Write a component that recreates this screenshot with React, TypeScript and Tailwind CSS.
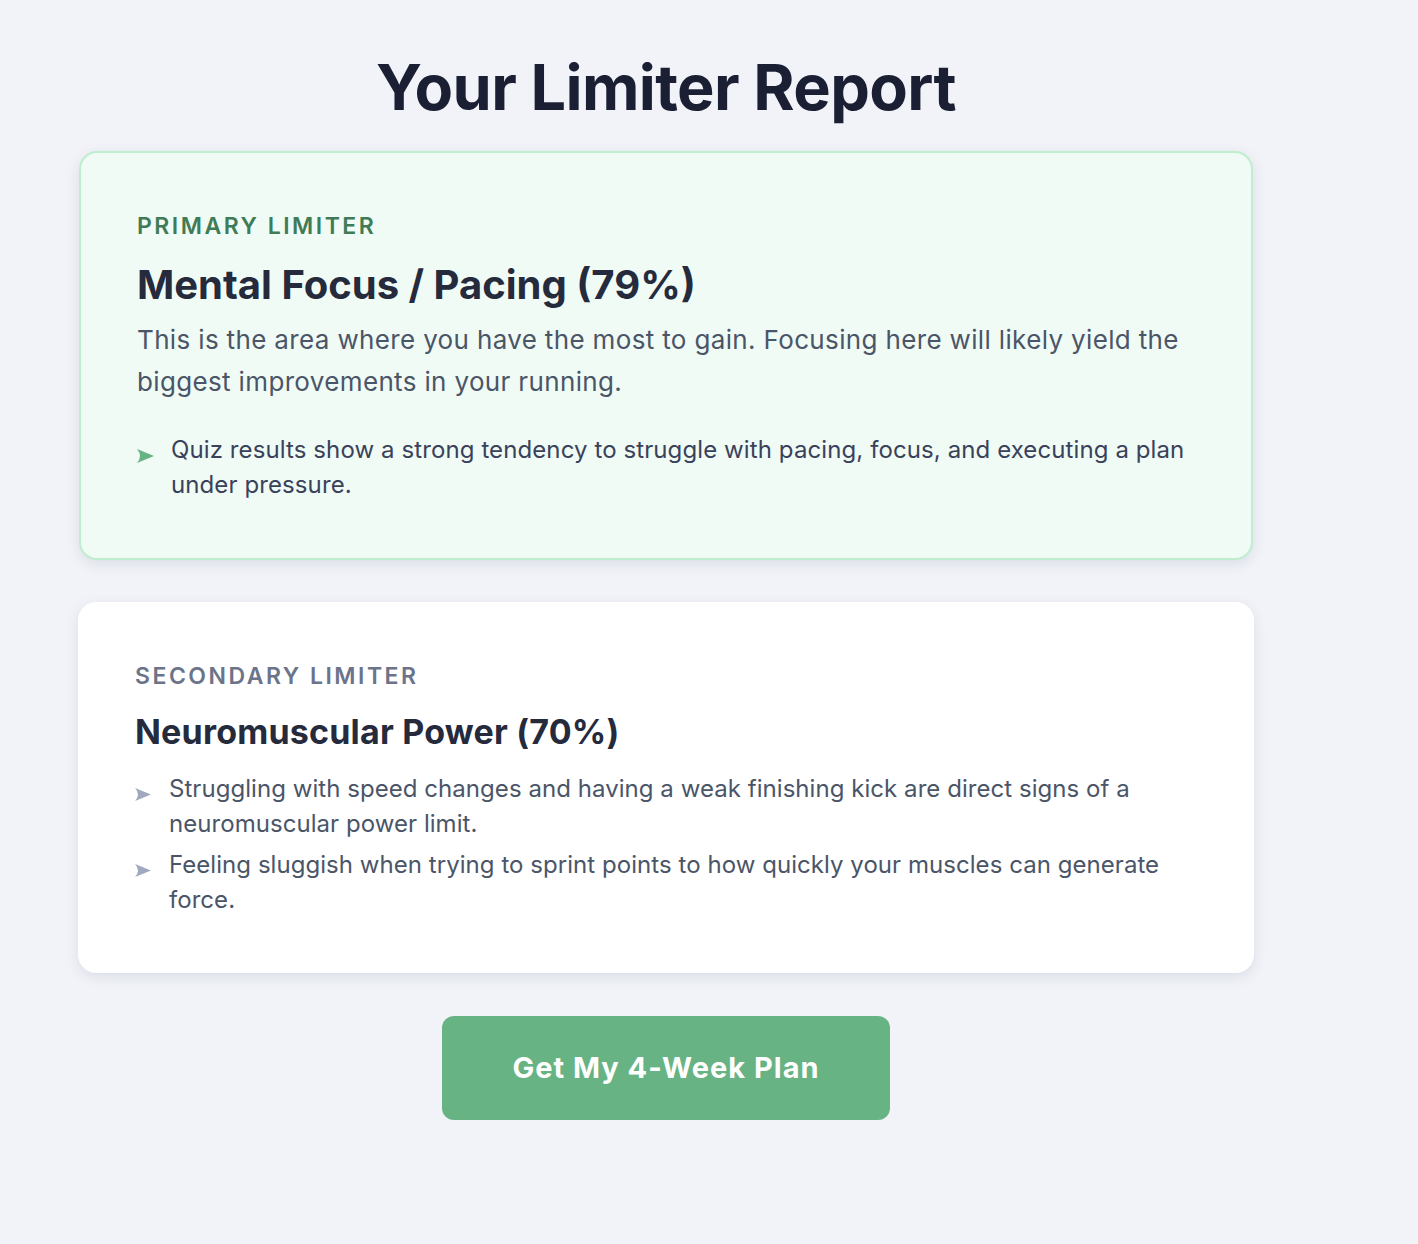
import React from "react";

function Arrowhead({ className }: { className: string }) {
  return (
    <svg viewBox="0 0 17 14" className={className} aria-hidden="true">
      <path d="M0 0 L17 7 L0 14 Q6 7 0 0 Z" fill="currentColor" />
    </svg>
  );
}

function Bullet({ text, tone }: { text: string; tone: "green" | "gray" }) {
  return (
    <li className="flex items-start">
      <Arrowhead
        className={
          tone === "green"
            ? "mt-[17px] h-[14px] w-[17px] shrink-0 text-[#68b384]"
            : "mt-[17px] h-[13px] w-[16px] shrink-0 text-[#a1a9be]"
        }
      />
      <span
        className={
          tone === "green"
            ? "ml-[17px] text-[24px] leading-[35px] tracking-[0.1px] text-[#39425a]"
            : "ml-[18px] text-[24px] leading-[35px] tracking-[0.05px] text-[#4b5568]"
        }
      >
        {text}
      </span>
    </li>
  );
}

export default function App() {
  return (
    <div
      className="min-h-screen bg-[#f1f3f8] pl-[78px]"
      style={{ fontFamily: "Inter, 'Noto Sans', sans-serif" }}
    >
      <div className="flex w-[1176px] flex-col items-center pt-[50px]">
        <h1 className="text-[63px] font-bold leading-[74px] tracking-[-0.01em] text-[#1b1f33]">
          Your Limiter Report
        </h1>

        <section className="mx-px mt-[27px] w-[1174px] self-center rounded-[18px] border-2 border-[#bfeecf] bg-[#f0fbf5] px-14 pt-14 pb-[56px] shadow-[0_4px_14px_rgba(30,40,70,0.10)]">
          <p className="text-[23px] font-semibold uppercase leading-[34px] tracking-[2.5px] text-[#3f7b56]">
            Primary Limiter
          </p>
          <h2 className="mt-[18px] text-[40px] font-bold leading-[48px] text-[#252b3c]">
            Mental Focus / Pacing (79%)
          </h2>
          <p className="mt-[10px] text-[26px] leading-[42px] tracking-[0.35px] text-[#4b5568]">
            This is the area where you have the most to gain. Focusing here will likely yield the
            biggest improvements in your running.
          </p>
          <ul className="mt-[29px] flex flex-col gap-[6px]">
            <Bullet
              tone="green"
              text="Quiz results show a strong tendency to struggle with pacing, focus, and executing a plan under pressure."
            />
          </ul>
        </section>

        <section className="mt-[42px] w-[1176px] rounded-[18px] border border-white bg-white px-14 pt-14 pb-[55px] shadow-[0_4px_14px_rgba(30,40,70,0.10)]">
          <p className="text-[23px] font-semibold uppercase leading-[34px] tracking-[2.5px] text-[#6b7489]">
            Secondary Limiter
          </p>
          <h2 className="mt-[18px] text-[34px] font-bold leading-[42px] tracking-[0.2px] text-[#252b3c]">
            Neuromuscular Power (70%)
          </h2>
          <ul className="mt-[18px] flex flex-col gap-[6px]">
            <Bullet
              tone="gray"
              text="Struggling with speed changes and having a weak finishing kick are direct signs of a neuromuscular power limit."
            />
            <Bullet
              tone="gray"
              text="Feeling sluggish when trying to sprint points to how quickly your muscles can generate force."
            />
          </ul>
        </section>

        <button
          type="button"
          className="mt-[43px] h-[104px] w-[448px] rounded-[12px] bg-[#67b383] text-[29px] font-bold tracking-[1px] text-white"
        >
          Get My 4-Week Plan
        </button>
      </div>
    </div>
  );
}
